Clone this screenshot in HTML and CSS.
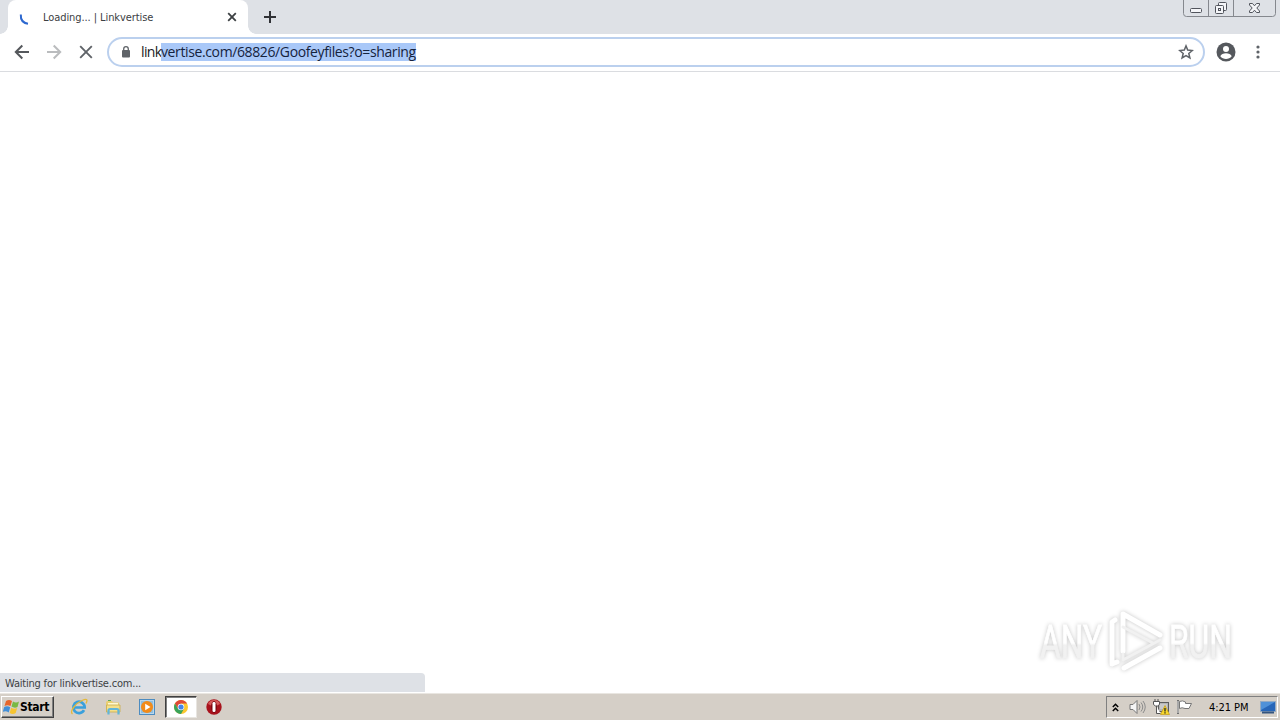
FILE: index.html
```
<!DOCTYPE html>
<html lang="en">
<head>
    <meta charset="utf-8" />
    <title>Loading... | Linkvertise</title>
    <link rel="stylesheet" href="styles.css">
</head>
<body>
<div class="tabstrip">
    <div class="tab">
        <svg class="spinner" width="16" height="16" viewBox="0 0 16 16"><path d="M1.800 3.500C1.500 8.500 4 12 9 12.800" fill="none" stroke="#2d68cf" stroke-width="2"/></svg>
        <span class="tab-title">Loading... | Linkvertise</span>
        <svg class="tab-close" width="10" height="10" viewBox="0 0 10 10"><path d="M1.200 1.200l7.600 7.600M8.800 1.200L1.200 8.800" stroke="#3c4043" stroke-width="1.800"/></svg>
    </div>
    <svg class="new-tab" width="12" height="12" viewBox="0 0 12 12"><path d="M6 0v12M0 6h12" stroke="#303236" stroke-width="2"/></svg>
    <div class="window-buttons">
        <svg width="93" height="17" viewBox="0 0 93 17" fill="none">
            <path d="M.5 0v13.500q0 3 3 3h86q3 0 3-3V0M25.500 0v16M50.500 0v16" stroke="#85888e"/>
            <g stroke="#51545c" fill="#f4f5f8">
                <rect x="7.500" y="8.500" width="11" height="4" rx="1"/>
                <rect x="35.500" y="2.500" width="8" height="8" rx="1"/>
                <rect x="32.500" y="5.500" width="8" height="8" rx="1"/>
                <rect x="35.500" y="8.500" width="2" height="2"/>
                <path d="M66.500 3.500h3l2 2.300 2-2.300h3v1.500L73.800 8l2.700 3v1.500h-3l-2-2.300-2 2.300h-3V11l2.700-3-2.700-3z"/>
            </g>
        </svg>
    </div>
</div>
<div class="toolbar">
    <svg class="back" width="16" height="16" viewBox="0 0 16 16"><path d="M15 8H2M8.300 1.500L1.800 8l6.500 6.500" fill="none" stroke="#55585c" stroke-width="2"/></svg>
    <svg class="forward" width="16" height="16" viewBox="0 0 16 16"><path d="M1 8h13M7.700 1.500L14.200 8l-6.500 6.500" fill="none" stroke="#babcbe" stroke-width="2"/></svg>
    <svg class="stop" width="14" height="14" viewBox="0 0 14 14"><path d="M1.200 1.200l11.600 11.600M12.800 1.200L1.200 12.800" stroke="#5f6368" stroke-width="1.900"/></svg>
    <div class="omnibox">
        <svg class="lock" width="10" height="12" viewBox="0 0 10 12"><rect x="1" y="4" width="8" height="7.500" rx="1" fill="#5f6368"/><path d="M2.700 5V3a2.300 2.300 0 0 1 4.600 0v2" fill="none" stroke="#5f6368" stroke-width="1.300"/></svg>
        <span class="url"><span class="typed">link</span><span class="selected">vertise.com/68826/Goofeyfiles?o=sharing</span></span>
        <svg class="star" width="16" height="16" viewBox="0 0 16 16"><path d="M8 1.900l1.700 4.200 4.600.4-3.500 3 1.100 4.500L8 11.600 4.100 14l1.100-4.500-3.500-3 4.600-.4z" fill="none" stroke="#5f6368" stroke-width="1.500"/></svg>
    </div>
    <svg class="avatar" width="20" height="20" viewBox="0 0 20 20"><circle cx="10" cy="10" r="9.500" fill="#55585d"/><circle cx="10" cy="7" r="3" fill="#fff"/><path d="M4.300 14.200c1.200-4 10.200-4 11.400 0-2.600 3.600-8.800 3.600-11.400 0z" fill="#fff"/></svg>
    <svg class="menu" width="4" height="14" viewBox="0 0 4 14" fill="#5f6368"><circle cx="2" cy="2" r="1.600"/><circle cx="2" cy="7" r="1.600"/><circle cx="2" cy="12" r="1.600"/></svg>
</div>
<div class="page">
    <div class="status">Waiting for linkvertise.com...</div>
    <svg class="watermark" width="220" height="76" viewBox="0 0 220 76">
        <defs>
            <linearGradient id="fade" x1="0" y1="0" x2="0" y2="1">
                <stop offset=".52" stop-color="#fff"/>
                <stop offset=".56" stop-color="#f1f1f1"/>
            </linearGradient>
        </defs>
        <g class="mark-text">
            <text x="10" y="52" textLength="62" lengthAdjust="spacingAndGlyphs">ANY</text>
            <text x="139" y="52" textLength="63" lengthAdjust="spacingAndGlyphs">RUN</text>
        </g>
        <g class="mark-logo">
            <path d="M93 45V8l37 21M85 14l-3 2v42l5-2M93 22v23M94 62l36-20"/>
            <path class="mark-shade" d="M93 21l30 16M93 48v6l37-20"/>
        </g>
    </svg>
</div>
<div class="taskbar">
    <div class="start">
        <svg width="17" height="16" viewBox="0 0 17 16">
            <path d="M3 2q3-2 6 0L7.500 7Q4.500 5.500 1.500 7z" fill="#e7662b"/>
            <path d="M10 2.500q3 2 6 0L14.500 8q-3 1.500-6-.5z" fill="#79b943"/>
            <path d="M1.200 8q3-1.500 6 .2L5.700 13.500q-3-2-6-.5z" fill="#428fd8"/>
            <path d="M8.200 8.700q3 2 6 .3L12.700 14q-3 2-6 0z" fill="#f6c431"/>
        </svg>
        <span>Start</span>
    </div>
    <svg class="ie" width="18" height="18" viewBox="0 0 18 18" fill="none">
        <path d="M14 12.200A5.700 5.700 0 1 1 14.700 9.500H4" stroke="#3aa0dc" stroke-width="2.700"/>
        <path d="M2.500 16C-1 13.500 6 5 12 2.500s5.500 0 4 3" stroke="#e4b93b" stroke-width="1.300"/>
    </svg>
    <svg class="explorer" width="17" height="17" viewBox="0 0 17 17">
        <path d="M1 3l1-1h5l1 1.500h6V13H1z" fill="#e9cf73"/><path d="M3 4h10v4H3z" fill="#fff8d0"/>
        <path d="M1.500 6H15v7H1.500z" fill="#f5e08a" stroke="#c9ac4c" stroke-width=".8"/>
        <path d="M3.500 15.500v-4q0-1.500 1.500-1.500h7q1.500 0 1.500 1.500v4" fill="none" stroke="#62b5d8" stroke-width="2.200"/><path d="M3 1.500h3" stroke="#57aa54"/>
    </svg>
    <svg class="player" width="16" height="16" viewBox="0 0 16 16"><rect x=".5" y=".5" width="15" height="15" fill="#b9d7ec" stroke="#4d8cc0"/><rect x="2" y="2" width="12" height="12" fill="#8fbfe0"/><circle cx="8" cy="8" r="6" fill="#f28b19"/><path d="M6.200 4.700L11.500 8l-5.300 3.300z" fill="#fff"/></svg>
    <div class="task-active">
        <svg width="14" height="14" viewBox="0 0 14 14"><circle cx="7" cy="7" r="7" fill="#fbc72f"/><path d="M.94 3.500A7 7 0 0 1 13.060 3.500H7L4 8.800z" fill="#df4937"/><path d="M.94 3.500A7 7 0 0 0 7 14l3-5.300H4z" fill="#39a35a"/><circle cx="7" cy="7" r="3.300" fill="#fff"/><circle cx="7" cy="7" r="2.600" fill="#4484e8"/></svg>
    </div>
    <svg class="opera" width="16" height="16" viewBox="0 0 16 16"><circle cx="8" cy="8" r="7.700" fill="#a8121c"/><path d="M2 5a6.500 6.500 0 0 1 12 0q-6 4-12 0z" fill="#d65a5a"/><ellipse cx="8" cy="8" rx="3" ry="6" fill="#7c0710"/><rect x="6.500" y="3" width="3" height="10" rx="1.300" fill="#fff"/></svg>
    <div class="tray">
        <svg class="chevrons" width="7" height="9" viewBox="0 0 7 9"><path d="M.8 4l2.700-2.700L6.200 4M.8 8l2.700-2.700L6.200 8" fill="none" stroke="#000" stroke-width="1.500"/></svg>
        <svg class="volume" width="17" height="16" viewBox="0 0 17 16"><path d="M1 5.500h3l4-4v13l-4-4H1z" fill="#f5f5f5" stroke="#777"/><path d="M10 5q2 3 0 6M12 3.500q3.500 4.500 0 9M14 2q4.500 6 0 12" fill="none" stroke="#8c8c8c"/></svg>
        <svg class="network" width="17" height="17" viewBox="0 0 17 17"><rect x="5.500" y="3.500" width="10" height="9" fill="#b5b5b5" stroke="#5d5d5d"/><path d="M7 5h7v5H7z" fill="#c9c9c9"/><path d="M.5 2.500h6v3l-2 1.500h-2l-2-1.500zM2 0v2.500M5 0v2.500M3.500 7v7.500h4" fill="#fff" stroke="#555"/><path d="M12 6.500l4.500 9h-9z" fill="#f7d82c" stroke="#c69b16" stroke-width=".7"/><path d="M12 9v3.500M12 13.300v1.200" stroke="#222" stroke-width="1.300"/></svg>
        <svg class="flag" width="17" height="16" viewBox="0 0 17 16"><path d="M3.500 2.500q3-1.500 6 .5v1.500h6L13 9.500H9q-3-1.500-5.500 0z" fill="#fff" stroke="#777"/><path d="M2 1v14" stroke="#6f6f6f" stroke-width="2"/><path d="M2 2v12" stroke="#fff" stroke-width=".8"/></svg>
        <span class="clock">4:21 PM</span>
        <svg class="desktop" width="16" height="13" viewBox="0 0 16 13"><rect x=".5" y=".5" width="15" height="10" fill="#2766b8" stroke="#93aac3"/><path d="M1 1h14L1 9z" fill="#4f91d8"/><path d="M2 11.500h12" stroke="#34557e" stroke-width="2"/></svg>
    </div>
</div>
</body>
</html>
```
FILE: styles.css
```
body {
    margin: 0;
    width: 1280px;
    height: 720px;
    overflow: hidden;
    display: flex;
    flex-direction: column;
    background: #fff;
    color: #202124;
    font-family: Tahoma, "DejaVu Sans Condensed", "DejaVu Sans", sans-serif;
    font-size: 11px;
}

svg {
    display: block;
    flex: none;
}

.tabstrip {
    height: 34px;
    flex: none;
    display: flex;
    background: #dee1e6;
}

.tab {
    position: relative;
    box-sizing: border-box;
    width: 240px;
    margin-left: 8px;
    padding: 0 11px;
    display: flex;
    align-items: center;
    background: #fff;
    border-radius: 8px 8px 0 0;
}

/* flared feet of the active tab */
.tab::before,
.tab::after {
    content: "";
    position: absolute;
    bottom: 0;
    width: 8px;
    height: 8px;
}

.tab::before {
    left: -8px;
    background: radial-gradient(circle at 0 0, #dee1e6 7.5px, #fff 8px);
}

.tab::after {
    right: -8px;
    background: radial-gradient(circle at 100% 0, #dee1e6 7.5px, #fff 8px);
}

.spinner {
    margin-top: 4px;
}

.tab-title {
    margin-left: 8px;
    flex: 1;
    white-space: nowrap;
    color: #3c4043;
    letter-spacing: -.08px;
}

.new-tab {
    margin: 11px 0 0 16px;
}

.window-buttons {
    margin: 0 4px 0 auto;
}

.toolbar {
    box-sizing: border-box;
    height: 38px;
    flex: none;
    padding-bottom: 1px;
    display: flex;
    align-items: center;
    border-bottom: 1px solid #dadce0;
}

.back {
    margin-left: 14px;
}

.forward {
    margin-left: 16px;
}

.stop {
    margin-left: 17px;
}

.omnibox {
    box-sizing: border-box;
    width: 1098px;
    height: 30px;
    margin-left: 14px;
    padding: 0 9px 0 12px;
    display: flex;
    align-items: center;
    border: 2px solid #bbd0ee;
    border-radius: 15px;
}

.url {
    margin-left: 10px;
    flex: 1;
    display: flex;
    white-space: nowrap;
    font-family: "Open Sans", "Noto Sans", sans-serif;
    font-size: 14px;
    line-height: 18px;
    letter-spacing: -.38px;
    color: #17191c;
}

.typed {
    width: 20px;
    letter-spacing: -.6px;
}

.selected {
    background: #a9c8f8;
    color: #15233d;
}

.avatar {
    margin-left: 11px;
}

.menu {
    margin-left: 20px;
}

.page {
    position: relative;
    flex: 1;
    display: flex;
    align-items: flex-end;
}

.status {
    box-sizing: border-box;
    width: 425px;
    height: 19px;
    margin-bottom: 1px;
    padding-left: 5px;
    line-height: 21px;
    background: #dee1e6;
    border-radius: 0 4px 0 0;
    color: #3c4043;
    letter-spacing: -.2px;
}

.watermark {
    position: absolute;
    right: 30px;
    bottom: 11px;
    filter: drop-shadow(0 0 2px #c4c4c4);
}

.mark-text {
    font-family: Roboto, sans-serif;
    font-size: 46px;
    fill: url(#fade);
    stroke: url(#fade);
    stroke-width: .8px;
}

.mark-logo {
    fill: none;
    stroke: #fff;
    stroke-width: 5px;
    stroke-linecap: round;
    stroke-linejoin: round;
}

.mark-shade {
    stroke: #f1f1f1;
    stroke-width: 3px;
}

.taskbar {
    box-sizing: border-box;
    height: 27px;
    flex: none;
    display: flex;
    align-items: center;
    background: #d5cfc7;
    border-top: 1px solid #e9e6e1;
    color: #000;
}

.start {
    box-sizing: border-box;
    width: 53px;
    height: 22px;
    margin-left: 1px;
    padding-left: 1px;
    display: flex;
    align-items: center;
    border: 1px solid;
    border-color: #fff #404040 #404040 #fff;
    box-shadow: inset -1px -1px #808080;
    font-weight: bold;
    font-size: 12px;
    letter-spacing: -.3px;
}

.ie {
    margin-left: 16px;
}

.explorer {
    margin-left: 17px;
}

.player {
    margin-left: 17px;
}

.task-active {
    box-sizing: border-box;
    width: 32px;
    height: 22px;
    margin-left: 10px;
    display: flex;
    align-items: center;
    justify-content: center;
    background: #fff;
    border: 1px solid;
    border-color: #404040 #e8e5e0 #e8e5e0 #404040;
    box-shadow: inset 1px 1px #808080;
}

.opera {
    margin-left: 9px;
}

.tray {
    box-sizing: border-box;
    width: 172px;
    height: 22px;
    margin: 0 2px 0 auto;
    padding-left: 5px;
    display: flex;
    align-items: center;
    border: 1px solid;
    border-color: #808080 #fff #fff #808080;
}

.volume {
    margin-left: 10px;
}

.network {
    margin-left: 7px;
}

.flag {
    margin-left: 6px;
}

.clock {
    margin-left: 16px;
    white-space: nowrap;
    letter-spacing: -.05px;
}

.desktop {
    margin: 0 1px 0 auto;
}
```
